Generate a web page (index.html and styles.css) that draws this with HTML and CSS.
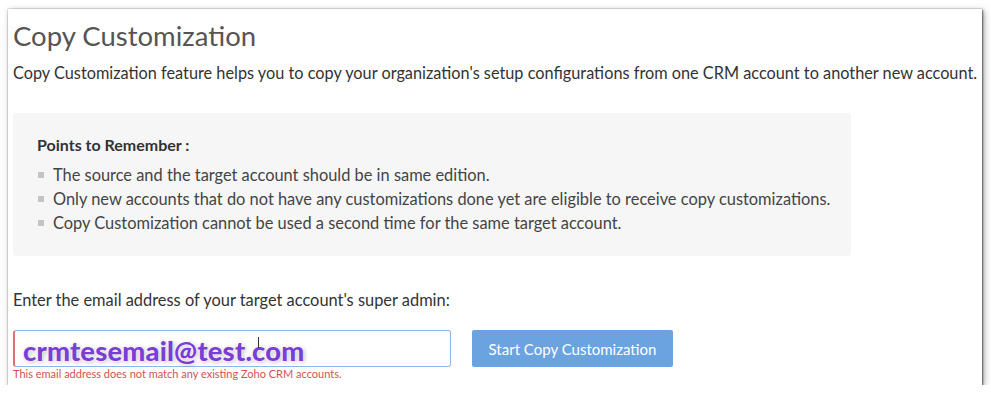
FILE: index.html
```html
<!DOCTYPE html>
<html lang="en">
<head>
  <meta charset="UTF-8">
  <title>Copy Customization</title>
  <link rel="stylesheet" href="styles.css">
</head>
<body>

  <div class="card">
    <h1>Copy Customization</h1>
    <p class="desc">Copy Customization feature helps you to copy your organization's setup configurations from one CRM account to another new account.</p>

    <!-- Points to remember -->
    <div class="note">
      <div class="note-title">Points to Remember :</div>
      <ul>
        <li>The source and the target account should be in same edition.</li>
        <li>Only new accounts that do not have any customizations done yet are eligible to receive copy customizations.</li>
        <li>Copy Customization cannot be used a second time for the same target account.</li>
      </ul>
    </div>

    <div class="label">Enter the email address of your target account's super admin:</div>

    <div class="form-row">
      <div class="field">
        <div class="input">
          <span class="value">crmtesemail@test.com</span>
          <span class="cursor"></span>
        </div>
        <div class="error">This email address does not match any existing Zoho CRM accounts.</div>
      </div>
      <button class="btn">Start Copy Customization</button>
    </div>
  </div>

</body>
</html>
```

FILE: styles.css
```css
body {
  margin: 0;
  padding: 9px 9px 0 8px;
  background: #fff;
  font-family: Lato, 'Open Sans', Arial, sans-serif;
  color: #333;
}

.card {
  height: 376px;
  box-sizing: border-box;
  padding: 12px 4px 0 5px;
  background: #fff;
  box-shadow: 0 0 1px rgba(0,0,0,0.5), 1px 1px 2px rgba(0,0,0,0.5), 2px 2px 7px rgba(0,0,0,0.35);
  overflow: hidden;
}

h1 {
  margin: 0;
  font-size: 27.5px;
  font-weight: 400;
  color: #555;
  line-height: 30px;
}

.desc {
  margin: 12px 0 0;
  font-size: 16.3px;
  line-height: 20px;
  color: #333;
  white-space: nowrap;
}

/* Points to remember */
.note {
  width: 838px;
  margin-top: 30px;
  padding: 22px 10px 20px 24px;
  box-sizing: border-box;
  height: 143px;
  background: #f6f6f6;
  border-radius: 3px;
}
.note-title {
  font-size: 16px;
  font-weight: bold;
  color: #333;
  line-height: 20px;
}
.note ul {
  list-style: none;
  margin: 8px 0 0;
  padding: 0;
}
.note li {
  display: flex;
  align-items: center;
  font-size: 16.4px;
  line-height: 24px;
  color: #444;
  white-space: nowrap;
}
.note li::before {
  content: "";
  width: 6px;
  height: 6px;
  background: #c4c4c4;
  margin: 0 9px 0 1px;
  flex-shrink: 0;
}

.label {
  margin-top: 34px;
  font-size: 16.4px;
  line-height: 20px;
  color: #333;
}

.form-row {
  display: flex;
  align-items: flex-start;
  gap: 21px;
  margin-top: 20px;
}
.field {
  width: 438px;
}
.input {
  position: relative;
  height: 37px;
  box-sizing: border-box;
  border: 1px solid #8fb6e8;
  border-left: 2px solid #e07070;
  border-radius: 3px;
  display: flex;
  align-items: center;
  padding-left: 8px;
}
.value {
  font-size: 27.3px;
  font-weight: 900;
  color: #7a3ed4;
  letter-spacing: 0.2px;
  text-shadow: 0 0 2px #fff, 0 0 3px #fff, 1px 1px 4px rgba(0,0,0,0.35);
  margin-top: 4px;
}
.cursor {
  position: absolute;
  left: 243px;
  top: 6px;
  width: 1px;
  height: 11px;
  background: #333;
}
.error {
  font-size: 11px;
  line-height: 12px;
  color: #d2524f;
  margin-top: 1px;
}

.btn {
  width: 201px;
  height: 37px;
  border: none;
  border-radius: 2px;
  background: #6aa3e0;
  color: #fff;
  font-family: inherit;
  font-size: 15px;
}
```
